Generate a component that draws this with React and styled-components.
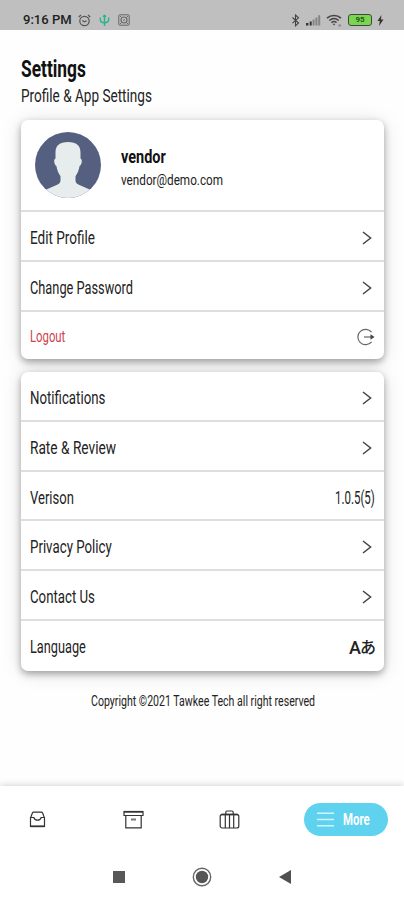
import React, { useLayoutEffect, useRef, useState } from "react";
import styled, { createGlobalStyle } from "styled-components";

function Condensed({ width, children, ...rest }) {
  const ref = useRef(null);
  const [scale, setScale] = useState(1);

  useLayoutEffect(() => {
    setScale(width / ref.current.offsetWidth);
  }, [width, children]);

  return (
    <TextBox $width={width} {...rest}>
      <TextInner ref={ref} style={{ transform: `scaleX(${scale})` }}>
        {children}
      </TextInner>
    </TextBox>
  );
}

const Chevron = () => (
  <ChevronSvg width="10" height="14" viewBox="0 0 10 14">
    <path d="M1 1l7.600 6L1 13" />
  </ChevronSvg>
);

const accountRows = [
  { label: "Edit Profile", width: 65, height: 50 },
  { label: "Change Password", width: 103, height: 50 },
];

const appRows = [
  { label: "Notifications", width: 75, height: 50 },
  { label: "Rate & Review", width: 86, height: 50 },
  { label: "Verison", width: 44, height: 49, value: "1.0.5(5)" },
  { label: "Privacy Policy", width: 82, height: 50 },
  { label: "Contact Us", width: 65, height: 50 },
];

function StatusBar() {
  return (
    <Status>
      <Clock width={49}>9:16 PM</Clock>
      <StatusLeft>
        <svg width="13" height="13" viewBox="0 0 13 13" fill="none" stroke="#555">
          <circle cx="6.5" cy="7" r="4.7" strokeWidth="1.2" />
          <path d="M.8 3L3 1M12.2 3L10 1M4.3 6.4l2.2 1.3 2.2-1" strokeWidth="1.2" />
        </svg>
        <svg width="11" height="13" viewBox="0 0 11 13" fill="none" stroke="#25b58c">
          <path d="M5.5 1v11M1.3 3.5v2c0 2 1.5 3.2 4.2 3.2s4.2-1.2 4.2-3.2v-2" strokeWidth="1.4" />
          <path d="M4 2.6L5.5.8 7 2.6z" fill="#25b58c" />
        </svg>
        <svg width="12" height="12" viewBox="0 0 12 12" fill="none" stroke="#666">
          <rect x=".8" y=".8" width="10.4" height="10.4" rx="1" />
          <circle cx="6" cy="6" r="3" strokeWidth="1.2" />
          <path d="M2 2l1.5 1.5M10 2L8.5 3.5M2 10l1.5-1.5M10 10L8.5 8.5M5 6.5l2-1" />
        </svg>
      </StatusLeft>
      <StatusRight>
        <svg width="9" height="13" viewBox="0 0 9 13" fill="none" stroke="#444">
          <path d="M1.5 3.5l6 5.5-3 2.8V1l3 2.8-6 5.4" strokeWidth="1.1" />
        </svg>
        <svg width="16" height="12" viewBox="0 0 16 12">
          <path d="M1 9h2.4v2.4H1zM4.7 7.4h2v4h-2z" fill="#333" />
          <path d="M7.6 5.4h2v6h-2zM10.4 3.4h2v8h-2zM13.2 1.2h2v10.2h-2z" fill="#858585" />
        </svg>
        <svg width="17" height="13" viewBox="0 0 17 13" fill="none" stroke="#444">
          <path d="M1 4.1C5 .6 11 .6 15 4.1" strokeWidth="1.7" />
          <path d="M3.3 6.5c3-2.5 6.6-2.5 9.4 0M5.4 8.6c1.8-1.5 3.6-1.5 5.2 0" strokeWidth="1.4" />
          <path d="M6.6 9.7h2.8L8 11.5z" fill="#444" stroke="none" />
          <path d="M12.5 11.5h2.5" stroke="#888" strokeWidth="2" />
        </svg>
        <Battery>95</Battery>
        <svg width="7" height="11" viewBox="0 0 7 11">
          <path d="M4.4 0L.5 6h2.3L2 11l4.5-6.5H4z" fill="#333" />
        </svg>
      </StatusRight>
    </Status>
  );
}

function Row({ item }) {
  return (
    <RowContainer $height={item.height}>
      <RowLabel width={item.width}>{item.label}</RowLabel>
      {item.value ? <RowLabel width={40}>{item.value}</RowLabel> : <Chevron />}
    </RowContainer>
  );
}

export default function App() {
  return (
    <Screen>
      <GlobalStyle />
      <StatusBar />
      <Content>
        <Title width={65}>Settings</Title>
        <Subtitle width={131}>Profile &amp; App Settings</Subtitle>

        <Card $height={239}>
          <Profile>
            <svg width="66" height="66" viewBox="0 0 66 66">
              <clipPath id="avatar">
                <circle cx="33" cy="33" r="33" />
              </clipPath>
              <g clipPath="url(#avatar)">
                <rect width="66" height="66" fill="#556080" />
                <path
                  d="M33 10c-8.500 0-12.500 3.500-12.500 10.500v6c-1.500.8-1.700 3-.8 5.200.5 1.200 1 2 1.700 2.300.8 4.500 2.100 7.500 4.100 10.200v4.300c0 1.800-1 3-2.800 4L8 59v8h50v-8L43.300 52.500c-1.800-1-2.800-2.200-2.800-4v-4.300c2-2.700 3.300-5.700 4.100-10.200.7-.3 1.200-1.100 1.700-2.300.9-2.200.7-4.400-.8-5.200v-6C45.500 13.500 41.500 10 33 10z"
                  fill="#e7eced"
                />
              </g>
            </svg>
            <ProfileText>
              <Name width={45}>vendor</Name>
              <Email width={102}>vendor@demo.com</Email>
            </ProfileText>
          </Profile>
          {accountRows.map((item) => (
            <Row key={item.label} item={item} />
          ))}
          <RowContainer $height={48} $last>
            <LogoutLabel width={35}>Logout</LogoutLabel>
            <LogoutSvg width="18" height="18" viewBox="0 0 18 18">
              <path d="M14.600 4.200A7.700 7.700 0 1 0 14.600 13.800" />
              <path d="M7 9h7" />
              <path d="M13.500 6.200L17.500 9l-4 2.800z" fill="#444" stroke="none" />
            </LogoutSvg>
          </RowContainer>
        </Card>

        <Card $height={299}>
          {appRows.map((item) => (
            <Row key={item.label} item={item} />
          ))}
          <RowContainer $height={50} $last>
            <RowLabel width={56}>Language</RowLabel>
            <LanguageMark>
              A<span>あ</span>
            </LanguageMark>
          </RowContainer>
        </Card>

        <Copyright width={224}>Copyright ©2021 Tawkee Tech all right reserved</Copyright>
      </Content>

      <TabBar>
        <Tab>
          <svg width="17" height="17" viewBox="0 0 17 17">
            <path d="M1.500 7L3.300 2.200C3.600 1.400 4 1.100 4.700 1.100h7.600c.7 0 1.100.3 1.400 1.100L15.500 7v8.500h-14z" />
            <path d="M1.500 6.500h3.300c.5 1.700 1.800 2.700 3.700 2.700s3.200-1 3.700-2.700h3.300" />
            <path d="M1.500 15.300h14" strokeWidth="1.800" />
          </svg>
        </Tab>
        <Tab>
          <svg width="21" height="19" viewBox="0 0 21 19">
            <path d="M1 1.500h19v4H1zM2.800 5.500v12.300h15.400V5.500" />
            <path d="M1 1.800h19" strokeWidth="1.800" />
            <path d="M8 9.500h5" stroke="#777" strokeWidth="2" />
          </svg>
        </Tab>
        <Tab>
          <svg width="21" height="19" viewBox="0 0 21 19">
            <rect x="1.200" y="4.300" width="18.600" height="13.700" rx="2" />
            <path d="M6.800 4V2.200c0-.8.5-1.200 1.200-1.200h5c.7 0 1.200.4 1.200 1.200V4M6.300 4.500V18M10.500 4.500V18M14.700 4.500V18" />
            <path d="M2 4.600h17" strokeWidth="1.600" />
          </svg>
        </Tab>
        <MoreButton>
          <svg width="17" height="15" viewBox="0 0 17 15">
            <path d="M0 1.200h17M0 7.500h17M0 13.800h17" />
          </svg>
          <MoreLabel width={27}>More</MoreLabel>
        </MoreButton>
      </TabBar>

      <SystemNav>
        <svg width="12" height="12" viewBox="0 0 12 12">
          <rect width="12" height="12" fill="#585858" />
        </svg>
        <svg width="20" height="20" viewBox="0 0 20 20">
          <circle cx="10" cy="10" r="8.700" fill="none" stroke="#666" strokeWidth="1.400" />
          <circle cx="10" cy="10" r="6.200" fill="#555" />
        </svg>
        <svg width="12" height="14" viewBox="0 0 12 14">
          <path d="M12 0v14L0 7z" fill="#505050" />
        </svg>
      </SystemNav>
    </Screen>
  );
}

const GlobalStyle = createGlobalStyle`
  * {
    box-sizing: border-box;
  }
  body {
    margin: 0;
    background: #fff;
  }
  svg {
    display: block;
    flex-shrink: 0;
  }
`;

const Screen = styled.div`
  display: flex;
  flex-direction: column;
  width: 404px;
  height: 900px;
  overflow: hidden;
  background: #fefefe;
  color: #222;
  font-family: Roboto, "Liberation Sans", sans-serif;
`;

const TextBox = styled.span`
  display: block;
  width: ${(props) => props.$width}px;
  white-space: nowrap;
`;

const TextInner = styled.span`
  display: inline-block;
  transform-origin: left center;
`;

const Status = styled.header`
  display: flex;
  align-items: center;
  height: 30px;
  padding: 10px 20px 0 23px;
  background: #bfbfbf;
`;

const Clock = styled(Condensed)`
  font-size: 12.5px;
  line-height: 18px;
  font-weight: 500;
`;

const StatusLeft = styled.div`
  display: flex;
  align-items: center;
  gap: 8px;
  margin-left: 6px;
`;

const StatusRight = styled.div`
  display: flex;
  align-items: center;
  margin-left: auto;
  gap: 5px;
`;

const Battery = styled.div`
  width: 24px;
  height: 12px;
  border: 1.5px solid #444;
  border-radius: 3px;
  background: #78d650;
  color: #235b17;
  font-size: 8px;
  line-height: 9px;
  font-weight: 700;
  text-align: center;
`;

const Content = styled.main`
  display: flex;
  flex-direction: column;
  flex: 1;
  padding: 25px 20px 0 21px;
`;

const Title = styled(Condensed)`
  font-size: 24px;
  line-height: 29px;
  font-weight: 700;
  color: #111;
`;

const Subtitle = styled(Condensed)`
  margin-bottom: 11px;
  font-size: 17.5px;
  line-height: 25px;
`;

const Card = styled.section`
  height: ${(props) => props.$height}px;
  margin-bottom: 13px;
  border-radius: 7px;
  background: #fff;
  box-shadow: 0 3px 7px rgba(0, 0, 0, 0.32), 0 2px 20px rgba(0, 0, 0, 0.13);
`;

const Profile = styled.div`
  display: flex;
  height: 92px;
  padding: 12px 14px;
  border-bottom: 2px solid #dedede;
`;

const ProfileText = styled.div`
  margin: 12px 0 0 20px;
`;

const Name = styled(Condensed)`
  font-size: 19px;
  line-height: 25px;
  font-weight: 700;
  color: #111;
`;

const Email = styled(Condensed)`
  font-size: 15.5px;
  line-height: 23px;
`;

const RowContainer = styled.div`
  display: flex;
  align-items: center;
  justify-content: space-between;
  height: ${(props) => props.$height}px;
  padding: ${(props) => (props.$last ? 2 : 4)}px 9px 0;
  border-bottom: ${(props) => (props.$last ? "none" : "2px solid #dedede")};
`;

const RowLabel = styled(Condensed)`
  font-size: 17.5px;
  line-height: 24px;
`;

const LogoutLabel = styled(RowLabel)`
  font-size: 16.5px;
  color: #cf3f4c;
`;

const ChevronSvg = styled.svg`
  margin-right: 3px;
  fill: none;
  stroke: #444;
  stroke-width: 1.5;
`;

const LogoutSvg = styled.svg`
  fill: none;
  stroke: #666;
  stroke-width: 1.2;
`;

const LanguageMark = styled.div`
  display: flex;
  align-items: flex-end;
  margin-right: -1px;
  font-size: 18px;
  line-height: 22px;
  font-weight: 500;

  > span {
    margin: 0 0 3px -1px;
    font-family: "Noto Sans CJK JP", sans-serif;
    font-size: 16px;
    line-height: 20px;
  }
`;

const Copyright = styled(Condensed)`
  align-self: center;
  margin-top: 7px;
  font-size: 14.5px;
  line-height: 22px;
`;

const TabBar = styled.nav`
  display: flex;
  align-items: center;
  gap: 75px;
  height: 67px;
  padding: 0 16px 0 27px;
  background: #fff;
  box-shadow: 0 -1px 7px rgba(0, 0, 0, 0.17);
`;

const Tab = styled.div`
  display: flex;
  justify-content: center;
  width: 21px;

  > svg {
    fill: none;
    stroke: #333;
    stroke-width: 1.2;
  }
`;

const MoreButton = styled.div`
  display: flex;
  align-items: center;
  gap: 9px;
  width: 84px;
  height: 33px;
  margin-left: -11px;
  padding-left: 13px;
  border-radius: 17px;
  background: #5ed2ef;
  color: #fff;

  > svg {
    stroke: #d5f5fc;
    stroke-width: 1.5;
  }
`;

const MoreLabel = styled(Condensed)`
  font-size: 16.5px;
  line-height: 24px;
  font-weight: 700;
`;

const SystemNav = styled.footer`
  display: flex;
  align-items: center;
  justify-content: space-between;
  height: 47px;
  padding: 0 113px;
  background: #fff;
`;
